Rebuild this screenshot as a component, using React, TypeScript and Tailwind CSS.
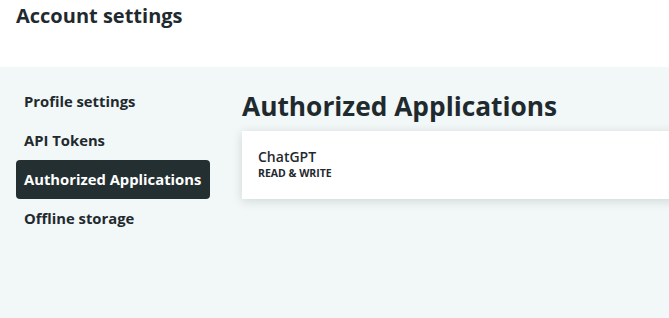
const navItems = [
  "Profile settings",
  "API Tokens",
  "Authorized Applications",
  "Offline storage",
];

export default function App() {
  return (
    <div
      className="flex h-[318px] w-[669px] flex-col overflow-hidden bg-white text-[#1f2a2e]"
      style={{ fontFamily: '"Open Sans", "Noto Sans", sans-serif' }}
    >
      {/* Header */}
      <header className="h-[67px] shrink-0 px-4 pt-[3px]">
        <h1 className="text-[20px] font-bold leading-[26px]">Account settings</h1>
      </header>

      {/* Body */}
      <div className="flex flex-1 bg-[#f2f7f7] pt-[15px]">
        {/* Sidebar */}
        <nav className="ml-4 flex w-[194px] shrink-0 flex-col">
          {navItems.map((item) => {
            const active = item === "Authorized Applications";
            return (
              <a
                key={item}
                className={
                  "flex h-[39px] items-center rounded-[4px] px-2 text-[14.8px] font-bold " +
                  (active ? "bg-[#232f31] text-white" : "text-[#1f2a2e]")
                }
              >
                {item}
              </a>
            );
          })}
        </nav>

        {/* Main */}
        <main className="ml-8 flex min-w-0 flex-1 flex-col pt-[6px]">
          <h2 className="text-[26.3px] font-bold leading-[36px]">Authorized Applications</h2>
          <div className="mt-[7px] w-[500px] shrink-0 bg-white px-4 pb-[19px] pt-[17px] shadow-[0_2px_10px_rgba(0,40,40,0.15)]">
            <div className="text-[14px] font-semibold leading-[18px]">ChatGPT</div>
            <div className="text-[10.5px] font-bold uppercase leading-[14px]">Read &amp; Write</div>
          </div>
        </main>
      </div>
    </div>
  );
}
